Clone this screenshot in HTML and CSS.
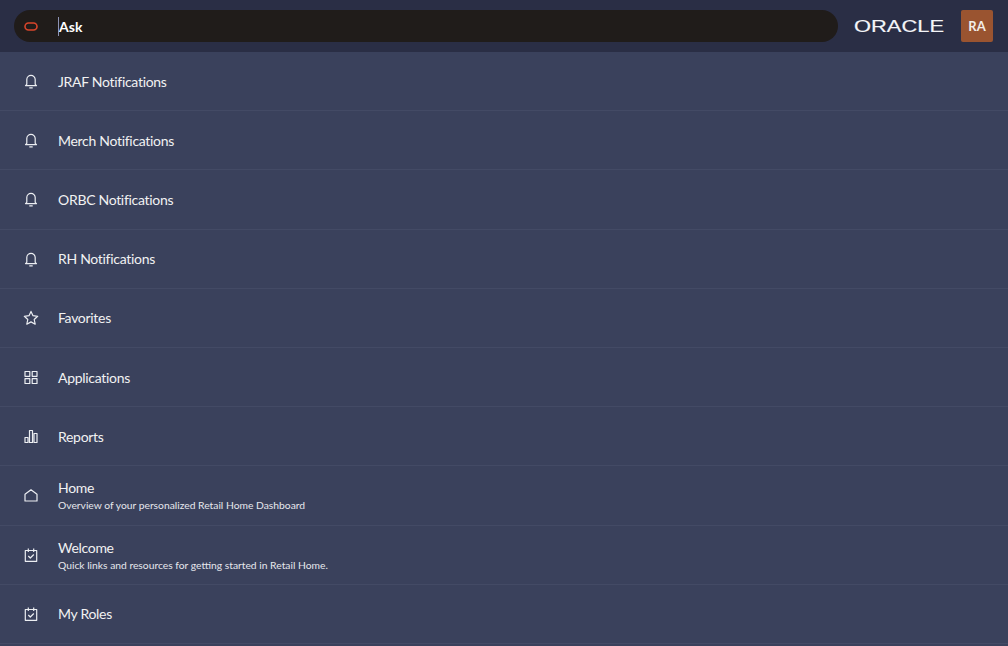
FILE: index.html
```html
<!DOCTYPE html>
<html lang="en">
<head>
<meta charset="utf-8">
<title>Ask Oracle</title>
<link rel="stylesheet" href="styles.css">
</head>
<body>
<header class="topbar">
  <div class="askbar">
    <span class="ask-icon"><svg width="14" height="9" viewBox="0 0 14 9"><rect x="1" y="1" width="12" height="7" rx="3.5" fill="none" stroke="#d8452b" stroke-width="1.6"/></svg></span>
    <span class="ask-text">Ask</span>
  </div>
  <div class="logo"><svg width="92" height="20" viewBox="0 0 92 20"><text class="logo-text" x="1" y="15.500" textLength="90" lengthAdjust="spacingAndGlyphs">ORACLE</text></svg></div>
  <div class="avatar">RA</div>
</header>
<ul class="menu">
  <li class="row"><span class="icon"><svg viewBox="0 0 16 16"><path d="M3.800 11.300V6.600a4.200 4.200 0 0 1 8.400 0v4.700l1.300 1.300h-11zM6.300 14.800h3.400"/></svg></span><div class="label"><div class="title">JRAF Notifications</div></div></li>
  <li class="row"><span class="icon"><svg viewBox="0 0 16 16"><path d="M3.800 11.300V6.600a4.200 4.200 0 0 1 8.400 0v4.700l1.300 1.300h-11zM6.300 14.800h3.400"/></svg></span><div class="label"><div class="title">Merch Notifications</div></div></li>
  <li class="row"><span class="icon"><svg viewBox="0 0 16 16"><path d="M3.800 11.300V6.600a4.200 4.200 0 0 1 8.400 0v4.700l1.300 1.300h-11zM6.300 14.800h3.400"/></svg></span><div class="label"><div class="title">ORBC Notifications</div></div></li>
  <li class="row"><span class="icon"><svg viewBox="0 0 16 16"><path d="M3.800 11.300V6.600a4.200 4.200 0 0 1 8.400 0v4.700l1.300 1.300h-11zM6.300 14.800h3.400"/></svg></span><div class="label"><div class="title">RH Notifications</div></div></li>
  <li class="row"><span class="icon"><svg viewBox="0 0 16 16"><path d="M8 1.400l2 4.300 4.700.6-3.500 3.200 1 4.700L8 11.900l-4.200 2.300 1-4.700-3.500-3.200 4.700-.6z"/></svg></span><div class="label"><div class="title">Favorites</div></div></li>
  <li class="row"><span class="icon"><svg viewBox="0 0 16 16"><path d="M2 2.500h4.800v4.800H2zM9.200 2.500H14v4.800H9.200zM2 9.700h4.800v4.800H2zM9.200 9.700H14v4.800H9.200z"/></svg></span><div class="label"><div class="title">Applications</div></div></li>
  <li class="row"><span class="icon"><svg viewBox="0 0 16 16"><path d="M2 9.500h3v5H2zM6.500 2.500h3v12h-3zM11 5.500h3v9h-3z"/></svg></span><div class="label"><div class="title">Reports</div></div></li>
  <li class="row"><span class="icon"><svg viewBox="0 0 16 16"><path d="M2 7.200L8 2.800l6 4.400v6.800H2z"/></svg></span><div class="label"><div class="title">Home</div><div class="sub">Overview of your personalized Retail Home Dashboard</div></div></li>
  <li class="row"><span class="icon"><svg viewBox="0 0 16 16"><path d="M2.300 3.500h11.400v10.800H2.300zM5.300 1.500v3.500M10.700 1.500v3.500M5.300 9l2 2 3.500-3.500"/></svg></span><div class="label"><div class="title">Welcome</div><div class="sub">Quick links and resources for getting started in Retail Home.</div></div></li>
  <li class="row"><span class="icon"><svg viewBox="0 0 16 16"><path d="M2.300 3.500h11.400v10.800H2.300zM5.300 1.500v3.500M10.700 1.500v3.500M5.300 9l2 2 3.500-3.500"/></svg></span><div class="label"><div class="title">My Roles</div></div></li>
</ul>
</body>
</html>
```
FILE: styles.css
```css
* { box-sizing: border-box; }
html, body { margin: 0; height: 100%; overflow: hidden; }
body {
  background: #3a415c;
  color: #f1f1f2;
  font-family: Lato, "Noto Sans", sans-serif;
}
.topbar {
  height: 52px;
  background: #2a2e45;
  display: flex;
  align-items: center;
  padding: 0 15px 0 14px;
}
.askbar {
  flex: 1;
  height: 32px;
  background: #201c1a;
  border-radius: 16px;
  display: flex;
  align-items: center;
  padding-left: 10px;
}
.ask-icon { width: 34px; display: flex; }
.ask-text {
  font-size: 14px;
  font-weight: 700;
  color: #fff;
  border-left: 1px solid #8d93b5;
  line-height: 18px;
  padding-top: 1px;
}
.logo { margin-left: 15px; display: flex; }
.logo-text {
  font-family: "Liberation Sans", sans-serif;
  font-size: 16px;
  fill: #f4f5f8;
  stroke: #f4f5f8;
  stroke-width: 0.15;
}
.avatar {
  width: 32px;
  height: 32px;
  margin-left: 16px;
  border-radius: 2px;
  background: #9a5430;
  color: #f1eee9;
  font-size: 13px;
  font-weight: 700;
  display: flex;
  align-items: center;
  justify-content: center;
}
.menu { list-style: none; margin: 0; padding: 0; }
.row {
  height: 59.2px;
  border-bottom: 1px solid #434a65;
  display: flex;
  align-items: center;
  padding-left: 23px;
}
.icon { width: 35px; height: 16px; display: flex; flex: none; }
.icon svg {
  width: 16px;
  height: 16px;
  fill: none;
  stroke: #eceef2;
  stroke-width: 1.2;
  stroke-linejoin: round;
}
.label { padding-top: 1px; }
.title { font-size: 14px; line-height: 20px; letter-spacing: -0.3px; color: #f1f1f2; }
.sub { font-size: 10.300px; line-height: 15px; color: #e6e7ec; }
```
